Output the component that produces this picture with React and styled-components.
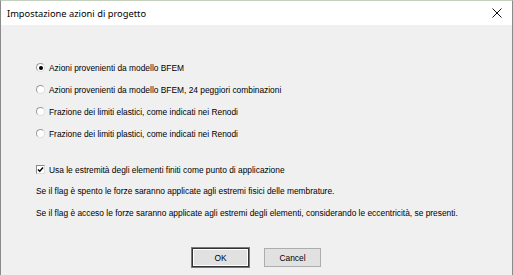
import React from 'react';
import styled, { createGlobalStyle } from 'styled-components';

const Global = createGlobalStyle`
    html, body {
        margin: 0;
        padding: 0;
        background: #f0f0f0;
    }
`;

const Window = styled.div`
    width: 513px;
    height: 275px;
    box-sizing: border-box;
    border-left: 1px solid #8a8a8a;
    border-right: 1px solid #8a8a8a;
    border-top: 1px solid #c4d0bd;
    background: #f0f0f0;
    display: flex;
    flex-direction: column;
    overflow: hidden;
`;

const TitleBar = styled.div`
    height: 24px;
    background: #ffffff;
    display: flex;
    align-items: center;
    justify-content: space-between;
    padding: 0 10px 0 6px;
    font-family: 'Noto Sans', 'Open Sans', sans-serif;
    font-size: 9.3px;
    color: #000;
`;

const Close = styled.svg`
    width: 10px;
    height: 10px;
    display: block;
`;

const Body = styled.div`
    flex: 1;
    display: flex;
    flex-direction: column;
    padding: 36px 0 0 35px;
    font-family: 'Liberation Sans', Arial, sans-serif;
    font-size: 8.4px;
    color: #000;
`;

const Group = styled.div`
    display: flex;
    flex-direction: column;
    gap: 9px;
`;

const Option = styled.label`
    display: flex;
    align-items: center;
    gap: 4px;
    height: 13px;
    margin-top: ${p => p.$mt || 0}px;
`;

const Radio = styled.span`
    width: 9px;
    height: 9px;
    border-radius: 50%;
    box-sizing: border-box;
    border: 1px solid #9a9a9a;
    border-right-color: #dedede;
    border-bottom-color: #dedede;
    background: #fff;
    display: flex;
    align-items: center;
    justify-content: center;
    &::after {
        content: '';
        width: 4px;
        height: 4px;
        border-radius: 50%;
        background: ${p => (p.$on ? '#000' : 'transparent')};
    }
`;

const Box = styled.span`
    width: 9px;
    height: 9px;
    box-sizing: border-box;
    border: 1px solid #8a8a8a;
    border-right-color: #dcdcdc;
    border-bottom-color: #dcdcdc;
    background: #fff;
    display: flex;
    align-items: center;
    justify-content: center;
`;

const Note = styled.p`
    margin: 9px 0 0;
    height: 13px;
    line-height: 13px;
    white-space: nowrap;
`;

const Buttons = styled.div`
    display: flex;
    gap: 15px;
    margin: auto 0 8px 156px;
`;

const Button = styled.button`
    width: 57px;
    height: 19px;
    padding: 0;
    background: #e1e1e1;
    font-family: 'Liberation Sans', Arial, sans-serif;
    font-size: 8.4px;
    color: #000;
    box-sizing: border-box;
    border: 1px solid ${p => (p.$primary ? '#333' : '#adadad')};
    box-shadow: ${p => (p.$primary ? '0 0 0 1px #7a7a7a, inset 0 0 0 1px #fff' : 'none')};
`;

const options = [
    'Azioni provenienti da modello BFEM',
    'Azioni provenienti da modello BFEM, 24 peggiori combinazioni',
    'Frazione dei limiti elastici, come indicati nei Renodi',
    'Frazione dei limiti plastici, come indicati nei Renodi',
];

export default function App() {
    return (
        <>
            <Global />
            <Window>
                <TitleBar>
                    <span>Impostazione azioni di progetto</span>
                    <Close viewBox="0 0 10 10">
                        <path d="M0.5 0.5 L9.5 9.5 M9.5 0.5 L0.5 9.5" stroke="#111" strokeWidth="1" />
                    </Close>
                </TitleBar>
                <Body>
                    <Group>
                        {options.map((o, i) => (
                            <Option key={o}>
                                <Radio $on={i === 0} />
                                {o}
                            </Option>
                        ))}
                    </Group>
                    <Option $mt={23}>
                        <Box>
                            <svg width="7" height="7" viewBox="0 0 7 7">
                                <path d="M1 3.5 L2.8 5.3 L6 1.5" stroke="#000" strokeWidth="1.4" fill="none" />
                            </svg>
                        </Box>
                        Usa le estremità degli elementi finiti come punto di applicazione
                    </Option>
                    <Note>Se il flag è spento le forze saranno applicate agli estremi fisici delle membrature.</Note>
                    <Note>Se il flag è acceso le forze saranno applicate agli estremi degli elementi, considerando le eccentricità, se presenti.</Note>
                    <Buttons>
                        <Button $primary>OK</Button>
                        <Button>Cancel</Button>
                    </Buttons>
                </Body>
            </Window>
        </>
    );
}
